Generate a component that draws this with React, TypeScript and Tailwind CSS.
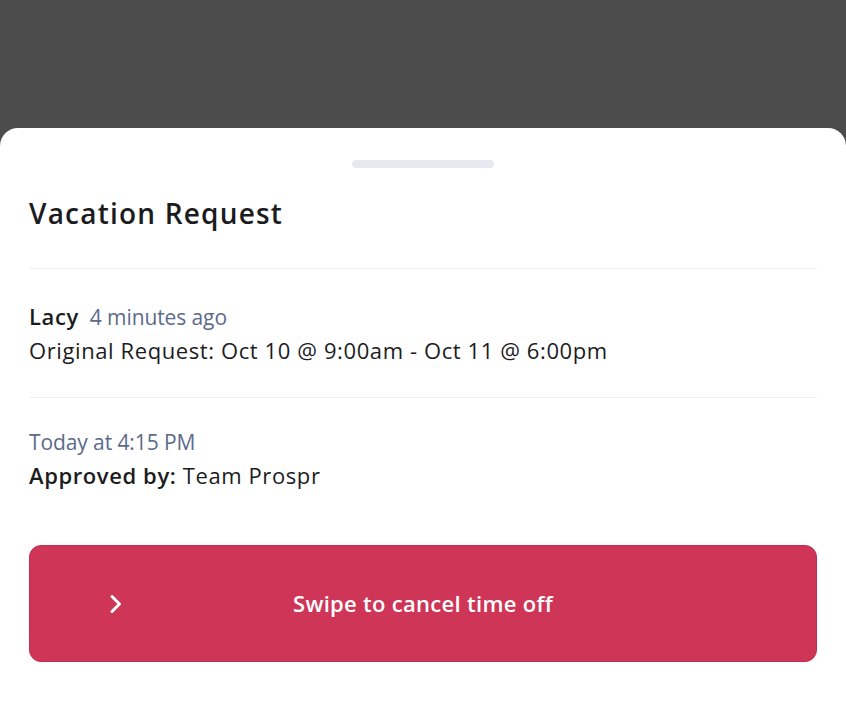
const font = { fontFamily: "'Open Sans', 'Noto Sans', sans-serif" };

function Chevron() {
  return (
    <svg width="14" height="20" viewBox="0 0 14 20" fill="none">
      <path d="M3 2.5 L10.5 10 L3 17.5" stroke="white" strokeWidth="3" strokeLinecap="round" strokeLinejoin="round" />
    </svg>
  );
}

export default function App() {
  return (
    <div className="h-[708px] w-full bg-[#4b4b4b] flex flex-col" style={font}>
      <div className="h-[128px] shrink-0" />
      <div className="flex-1 bg-white rounded-t-[18px] px-[29px] pt-[32px] text-[#1c1c1e]">
        <div className="flex justify-center pr-[1px]">
          <div className="h-[8px] w-[142px] rounded-full bg-[#e8e8f0]" />
        </div>

        <h1 className="mt-[27px] text-[28px] leading-[36px] font-semibold tracking-[1.2px]">Vacation Request</h1>

        <div className="mt-[37px] border-t border-[#eeeeee]" />

        <div className="pt-[31px] pb-[30px] text-[22px] leading-[33px] tracking-[0.6px]">
          <div className="flex items-baseline gap-[11px]">
            <span className="font-semibold">Lacy</span>
            <span className="text-[#5b6b8c] text-[21px] tracking-[-0.1px]">4 minutes ago</span>
          </div>
          <div>Original Request: Oct 10 @ 9:00am - Oct 11 @ 6:00pm</div>
        </div>

        <div className="border-t border-[#eeeeee]" />

        <div className="pt-[28px] text-[22px] leading-[33px] tracking-[0.6px]">
          <div className="text-[#5b6b8c] text-[21px] tracking-[-0.1px]">Today at 4:15 PM</div>
          <div>
            <span className="font-semibold">Approved by:</span> Team Prospr
          </div>
        </div>

        <div className="mt-[53px] h-[117px] rounded-[12px] bg-[#cf3557] border border-[#c42d4f] flex items-center relative">
          <div className="absolute left-[79px] top-1/2 -translate-y-1/2 flex">
            <Chevron />
          </div>
          <div className="flex-1 text-center text-white text-[22px] font-semibold tracking-[0.3px]">Swipe to cancel time off</div>
        </div>
      </div>
    </div>
  );
}
